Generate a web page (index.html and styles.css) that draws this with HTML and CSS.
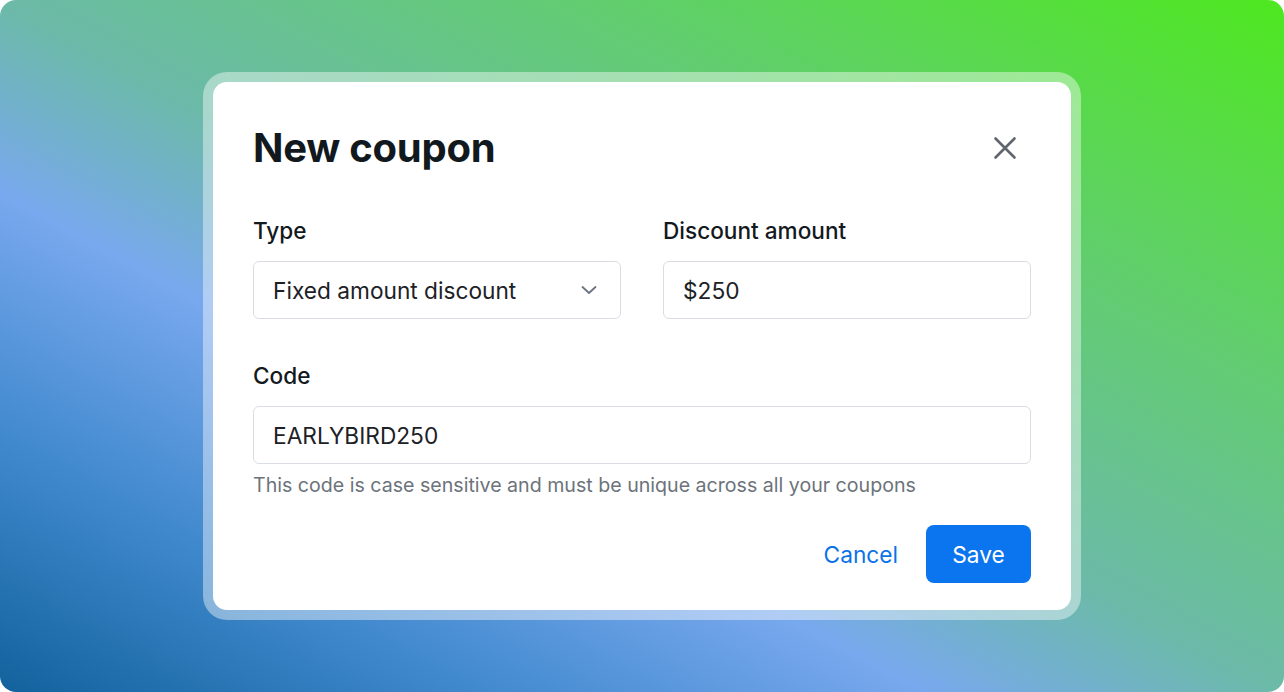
FILE: index.html
```html
<!DOCTYPE html>
<html lang="en">
<head>
<meta charset="utf-8">
<title>New coupon</title>
<link rel="stylesheet" href="styles.css">
</head>
<body>
<div class="scene">
  <div class="frame">
    <div class="card">
      <div class="head">
        <h1 class="title">New coupon</h1>
        <button class="close" aria-label="Close">
          <svg width="24" height="24" viewBox="0 0 24 24" fill="none" stroke="#5f666e" stroke-width="2.6" stroke-linecap="round"><path d="M2.5 2.5L21.5 21.5M21.5 2.5L2.5 21.5"/></svg>
        </button>
      </div>
      <div class="row">
        <div class="field">
          <label class="label">Type</label>
          <div class="input select">
            <span>Fixed amount discount</span>
            <svg width="16" height="10" viewBox="0 0 16 10" fill="none" stroke="#6b7280" stroke-width="1.8" stroke-linecap="round" stroke-linejoin="round"><path d="M1.5 2L8 8L14.5 2"/></svg>
          </div>
        </div>
        <div class="field">
          <label class="label">Discount amount</label>
          <div class="input">$250</div>
        </div>
      </div>
      <div class="field code">
        <label class="label">Code</label>
        <div class="input">EARLYBIRD250</div>
        <p class="help">This code is case sensitive and must be unique across all your coupons</p>
      </div>
      <div class="actions">
        <button class="btn cancel">Cancel</button>
        <button class="btn save">Save</button>
      </div>
    </div>
  </div>
</div>
</body>
</html>
```

FILE: styles.css
```css
* { box-sizing: border-box; }
html, body { margin: 0; padding: 0; background: #fff; }
body { font-family: Inter, "Noto Sans", "Liberation Sans", sans-serif; }

.scene {
  width: 1284px;
  height: 692px;
  border-radius: 16px;
  overflow: hidden;
  background: linear-gradient(to top right, #12629d 0%, #3f88cc 18%, #78a8ee 36%, #6cbaa8 50%, #62cc72 72%, #4ee820 100%);
  display: flex;
  align-items: center;
  justify-content: center;
}

.frame {
  padding: 10px;
  border-radius: 24px;
  background: rgba(255, 255, 255, 0.42);
}

.card {
  width: 858px;
  height: 528px;
  background: #fff;
  border-radius: 14px;
  padding: 40px 40px 27px;
  display: flex;
  flex-direction: column;
}

.head {
  display: flex;
  align-items: center;
  justify-content: space-between;
  height: 52px;
}

.title {
  margin: 0;
  font-size: 40px;
  line-height: 52px;
  font-weight: 700;
  color: #12191e;
  letter-spacing: -0.25px;
}

.close {
  border: 0;
  background: none;
  padding: 0;
  margin-right: 14px;
  width: 24px;
  height: 24px;
  display: flex;
  cursor: pointer;
}

.row {
  margin-top: 43px;
  display: grid;
  grid-template-columns: 1fr 1fr;
  column-gap: 42px;
}

.field { display: flex; flex-direction: column; }

.label {
  font-size: 22.6px;
  line-height: 28px;
  font-weight: 500;
  color: #14191e;
  margin-bottom: 16px;
}

.input {
  height: 58px;
  border: 1px solid #d9dde3;
  border-radius: 6px;
  padding: 0 19px;
  display: flex;
  align-items: center;
  justify-content: space-between;
  font-size: 22.7px;
  color: #1c2126;
}

.select svg { margin-right: 4px; }

.code { margin-top: 43px; }

.help {
  margin: 9px 0 0;
  font-size: 19.6px;
  line-height: 24px;
  color: #6c737b;
}

.actions {
  margin-top: 28px;
  display: flex;
  justify-content: flex-end;
  align-items: center;
  gap: 12px;
}

.btn {
  font-family: inherit;
  font-size: 22.7px;
  border: 0;
  height: 58px;
  border-radius: 8px;
  cursor: pointer;
}

.cancel {
  background: none;
  color: #0b72e7;
  padding: 0 16px;
}

.save {
  width: 105px;
  background: #0b74ef;
  color: #fff;
}
```
